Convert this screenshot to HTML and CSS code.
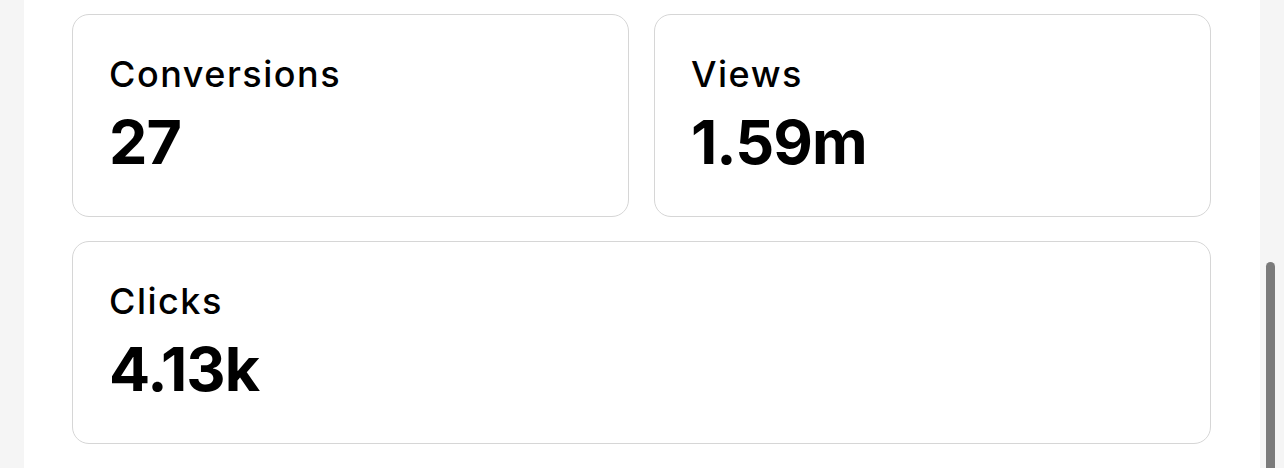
FILE: index.html
```html
<!DOCTYPE html>
<html>
<head>
<meta charset="utf-8">
<link rel="stylesheet" href="styles.css">
</head>
<body>
<main class="panel">
  <div class="grid">
    <section class="card">
      <div class="label">Conversions</div>
      <div class="value">27</div>
    </section>
    <section class="card">
      <div class="label">Views</div>
      <div class="value">1.59m</div>
    </section>
    <section class="card wide">
      <div class="label">Clicks</div>
      <div class="value">4.13k</div>
    </section>
  </div>
</main>
<div class="scroll-thumb"></div>
</body>
</html>
```
FILE: styles.css
```css
html, body {
  margin: 0;
  padding: 0;
  height: 468px;
  overflow: hidden;
  background: #f5f5f5;
}
body {
  font-family: Inter, "Liberation Sans", sans-serif;
  color: #000;
}
.panel {
  margin-left: 24px;
  width: 1236px;
  height: 468px;
  background: #fff;
  box-sizing: border-box;
  padding: 14px 49px 0 48px;
}
.grid {
  display: grid;
  grid-template-columns: 1fr 1fr;
  column-gap: 25px;
  row-gap: 24px;
}
.card {
  height: 203px;
  box-sizing: border-box;
  border: 1px solid #d6d6d6;
  border-radius: 17px;
  padding: 37px 36px;
}
.wide {
  grid-column: span 2;
}
.label {
  font-size: 36px;
  line-height: 44px;
  font-weight: 500;
  letter-spacing: 1.5px;
}
.value {
  margin-top: 15px;
  font-size: 61px;
  font-weight: 700;
  line-height: 62px;
  letter-spacing: -1px;
}
.scroll-thumb {
  position: absolute;
  left: 1266px;
  top: 262px;
  width: 9px;
  height: 220px;
  border-radius: 5px;
  background: #7b7b7b;
}
```
